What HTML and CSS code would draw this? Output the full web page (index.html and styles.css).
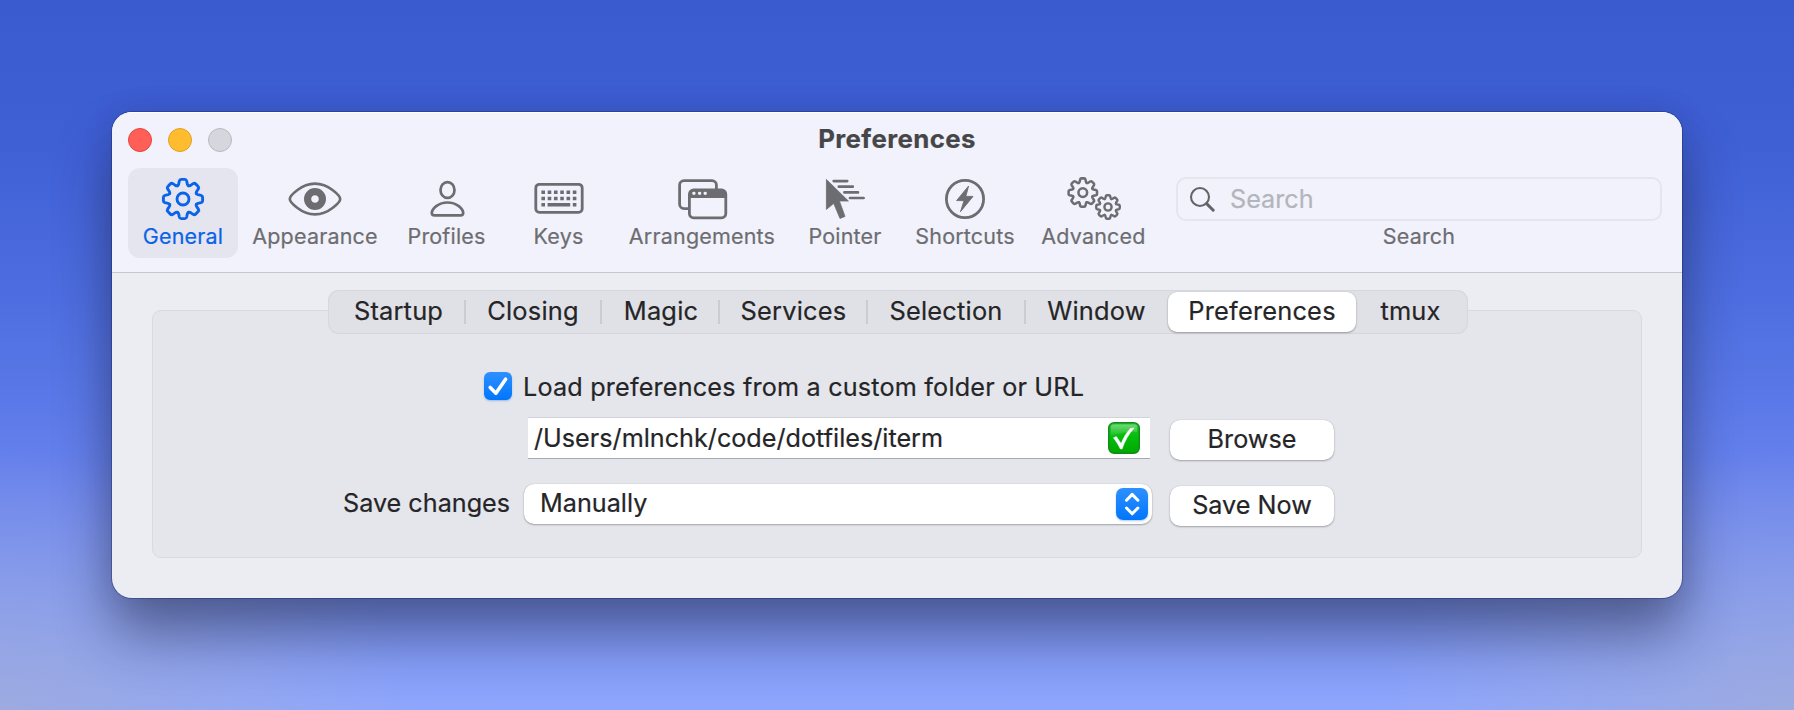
FILE: index.html
```html
<!DOCTYPE html>
<html lang="en">
<head>
<meta charset="utf-8">
<title>Preferences</title>
<link rel="stylesheet" href="styles.css">
</head>
<body>
<svg class="defs" aria-hidden="true">
  <defs>
    <path id="tooth" d="M-5.5-13.3C-4.6-13.7-4.5-14.2-4.3-15L-3.7-18Q-3.3-19.6-1.8-19.6H1.8Q3.3-19.6 3.7-18L4.3-15C4.5-14.2 4.6-13.7 5.5-13.3"/>
    <g id="gear" fill="none" stroke="currentColor" stroke-linecap="round" stroke-linejoin="round">
      <use href="#tooth"/><use href="#tooth" transform="rotate(45)"/><use href="#tooth" transform="rotate(90)"/><use href="#tooth" transform="rotate(135)"/>
      <use href="#tooth" transform="rotate(180)"/><use href="#tooth" transform="rotate(225)"/><use href="#tooth" transform="rotate(270)"/><use href="#tooth" transform="rotate(315)"/>
      <circle r="6"/>
    </g>
  </defs>
</svg>
<main class="window">
  <header class="header">
    <div class="titlebar">
      <div class="lights"><i class="light close"></i><i class="light minimize"></i><i class="light zoom"></i></div>
      <h1 class="title">Preferences</h1>
    </div>
    <nav class="toolbar">
      <a class="tool general selected"><svg class="icon" viewBox="-30 -22 60 44"><use href="#gear" stroke-width="2.9"/></svg><span>General</span></a>
      <a class="tool appearance"><svg class="icon" viewBox="-30 -22 60 44"><path d="M-25.2 0C-25.2-2.8-14-15.4 0-15.4S25.2-2.8 25.2 0S14 15.4 0 15.4S-25.2 2.8-25.2 0Z" fill="none" stroke="currentColor" stroke-width="2.7"/><circle r="7.4" fill="none" stroke="currentColor" stroke-width="7.2"/></svg><span>Appearance</span></a>
      <a class="tool profiles"><svg class="icon" viewBox="-30 -22 60 44"><g fill="none" stroke="currentColor" stroke-width="2.7"><ellipse cx=".5" cy="-9" rx="7" ry="7.9"/><path d="M-12.6 16.4c-2 0-2.6-1-2.6-2.3c0-4.5 6.6-10.6 15.7-10.6s15.7 6.1 15.7 10.6c0 1.3-.6 2.3-2.6 2.3z"/></g></svg><span>Profiles</span></a>
      <a class="tool keys"><svg class="icon" viewBox="-30 -22 60 44"><rect x="-23.2" y="-14.7" width="46.4" height="28" rx="3.6" fill="none" stroke="currentColor" stroke-width="2.8"/><g stroke="currentColor" stroke-width="3.6" stroke-dasharray="3.6 2.68"><path d="M-17.6-6.8H17.4M-17.6-.5H17.4"/></g><path d="M-17.6 5.7h3.6M-11.4 5.7h22.6M13.8 5.7h3.6" stroke="currentColor" stroke-width="3.6"/></svg><span>Keys</span></a>
      <a class="tool arrangements"><svg class="icon" viewBox="-30 -22 60 44"><g fill="none" stroke="currentColor" stroke-width="2.8"><path d="M-14 9.6h-4a4.4 4.4 0 0 1-4.4-4.4V-14a4.4 4.4 0 0 1 4.4-4.4h28A4.4 4.4 0 0 1 14.4-14v4"/><rect x="-12.6" y="-9" width="36.4" height="27.8" rx="4.2"/></g><path fill="currentColor" fill-rule="evenodd" d="M-13-5a5 5 0 0 1 5-5h27a5 5 0 0 1 5 5v4h-37zM-9.8-5.7a1.7 1.7 0 1 0 3.4 0a1.7 1.7 0 1 0-3.4 0M-4.1-5.7a1.7 1.7 0 1 0 3.4 0a1.7 1.7 0 1 0-3.4 0M1.5-5.7a1.7 1.7 0 1 0 3.4 0a1.7 1.7 0 1 0-3.4 0"/></svg><span>Arrangements</span></a>
      <a class="tool pointer"><svg class="icon" viewBox="-30 -22 60 44"><path d="M-18.6-19.6L3.4 2H-5.6L0 17.4L-5 19.4L-11.3 4.4L-18.6 10.4Z" fill="currentColor" stroke="currentColor" stroke-width=".8" stroke-linejoin="round"/><path d="M-11.3-17.9H2.2M-6.2-12.3H7.8M-.6-6.6H13M5-1H18.6" stroke="currentColor" stroke-width="2.7" stroke-linecap="round"/></svg><span>Pointer</span></a>
      <a class="tool shortcuts"><svg class="icon" viewBox="-30 -22 60 44"><circle r="18.6" fill="none" stroke="currentColor" stroke-width="2.8"/><path d="M3.6-13L-8.4 1.6H-1L-4.5 12.7L8-2.6H.8Z" fill="currentColor" stroke="currentColor" stroke-width=".9" stroke-linejoin="round"/></svg><span>Shortcuts</span></a>
      <a class="tool advanced"><svg class="icon" viewBox="-30 -22 60 44"><use href="#gear" stroke-width="3.5" transform="translate(-11.2 -6.4) scale(.725)"/><use href="#gear" stroke-width="4" transform="translate(14 8) scale(.6)"/></svg><span>Advanced</span></a>
      <div class="search">
        <div class="search-field"><svg class="lens" viewBox="0 0 28 28"><circle cx="12" cy="12" r="9" fill="none" stroke="currentColor" stroke-width="2.1"/><path d="M18.6 18.6L25.2 25.2" stroke="currentColor" stroke-width="3" stroke-linecap="round"/></svg><span>Search</span></div>
        <span class="search-label">Search</span>
      </div>
    </nav>
  </header>
  <section class="body">
    <div class="tabs">
      <a class="tab startup">Startup</a>
      <a class="tab closing">Closing</a>
      <a class="tab magic">Magic</a>
      <a class="tab services">Services</a>
      <a class="tab selection">Selection</a>
      <a class="tab win">Window</a>
      <a class="tab prefs active">Preferences</a>
      <a class="tab tmux">tmux</a>
    </div>
    <div class="panel">
      <div class="load-row">
        <span class="checkbox"><svg viewBox="0 0 28 28"><path d="M6.2 15.4L11.9 21.2L21.6 7.2" fill="none" stroke="#fff" stroke-width="3.6" stroke-linecap="round" stroke-linejoin="round"/></svg></span>
        <span class="load-label">Load preferences from a custom folder or URL</span>
      </div>
      <div class="path-row">
        <div class="path-field"><span>/Users/mlnchk/code/dotfiles/iterm</span>
          <svg class="valid" viewBox="0 0 32 32"><defs><linearGradient id="green" x2="0" y2="1"><stop stop-color="#2fc73a"/><stop offset=".45" stop-color="#04bd0c"/><stop offset="1" stop-color="#00a800"/></linearGradient><linearGradient id="gloss" x2="0" y2="1"><stop stop-color="#fff" stop-opacity=".32"/><stop offset="1" stop-color="#fff" stop-opacity=".05"/></linearGradient></defs><rect x=".7" y=".7" width="30.6" height="30.6" rx="5.5" fill="url(#green)" stroke="#128a1c" stroke-width="1.4"/><path d="M3 4.5Q3 2.5 6 2.5H26Q29 2.5 29 4.5V10C20 9 10 12 3 14Z" fill="url(#gloss)"/><path d="M5.4 15.8L8.4 14.6L13.1 21.6C15.5 15.4 18.6 10.5 22.4 6.4L26.2 6C20.5 12.2 16.5 19.5 14.1 27L12.3 26.9C10.2 22.7 8.3 19.4 5.4 15.8Z" fill="#fff" stroke="#fff" stroke-width=".5"/></svg>
        </div>
        <a class="button browse">Browse</a>
      </div>
      <div class="save-row">
        <span class="save-label">Save changes</span>
        <div class="popup"><span>Manually</span>
          <span class="arrows"><svg viewBox="0 0 32 32"><path d="M10.5 12.2L16.2 6.4L21.9 12.2M10.5 20L16.2 25.8L21.9 20" fill="none" stroke="#fff" stroke-width="3" stroke-linecap="round" stroke-linejoin="round"/></svg></span>
        </div>
        <a class="button save">Save Now</a>
      </div>
    </div>
  </section>
</main>
</body>
</html>
```
FILE: styles.css
```css
* { box-sizing: border-box; }
body {
  margin: 0;
  width: 1794px;
  height: 710px;
  overflow: hidden;
  padding: 112px;
  font-family: Inter, "Liberation Sans", sans-serif;
  font-size: 25.2px;
  color: #252527;
  -webkit-text-stroke: .2px;
  background:
    radial-gradient(ellipse 420px 260px at 0 100%, rgba(162,172,215,.75), rgba(160,170,215,0)),
    radial-gradient(ellipse 420px 260px at 100% 100%, rgba(162,172,215,.75), rgba(160,170,215,0)),
    linear-gradient(#3a5ad0 0%, #3f5fd5 20%, #4c6cdf 40%, #5b79e8 57%, #6b85ee 70%, #7b95f5 85%, #8ea6fd 100%);
}
.defs { position: absolute; width: 0; height: 0; }
.window {
  display: flex;
  flex-direction: column;
  width: 1570px;
  height: 486px;
  border-radius: 20px;
  overflow: hidden;
  background: #ecedf3;
  box-shadow: 0 0 0 1px rgba(20,30,90,.35), 0 36px 56px rgba(25,30,55,.48), 0 0 30px rgba(25,30,55,.12);
}
.header {
  height: 161px;
  background: #f1f2fb;
  border-bottom: 1px solid #c6c7cf;
  box-shadow: inset 0 1px #fff;
}
.titlebar { display: grid; grid-template-columns: 104px 1fr 104px; padding: 16px; height: 56px; }
.lights { display: flex; gap: 16px; }
.light { width: 24px; height: 24px; border-radius: 50%; border: 1px solid; }
.close { background: #ff5f57; border-color: #e2463f; }
.minimize { background: #febc2e; border-color: #e0a028; }
.zoom { background: #d6d7de; border-color: #b9bac1; }
.title { margin: -1px 0 0; font-size: 25.8px; line-height: 24px; letter-spacing: .4px; font-weight: 700; text-align: center; color: #464649; }
.toolbar { display: flex; padding-left: 16px; }
.tool {
  display: flex;
  flex-direction: column;
  align-items: center;
  height: 90px;
  padding-top: 9px;
  border-radius: 12px;
  color: #6d6d71;
  font-size: 21.5px;
  line-height: 30px;
  letter-spacing: .18px;
}
.icon { width: 60px; height: 44px; }
.selected { color: #0a63e9; background: #e4e5ee; }
.general { width: 110px; }
.appearance { width: 154px; }
.profiles { width: 109px; }
.keys { width: 115px; }
.arrangements { width: 172px; }
.pointer { width: 114px; }
.shortcuts { width: 126px; }
.advanced { width: 131px; }
.search { display: flex; flex-direction: column; width: 486px; margin: 9px 0 0 17px; }
.search-field {
  display: flex;
  align-items: center;
  height: 44px;
  padding-left: 10px;
  gap: 14px;
  border: 2px solid #e4e5ed;
  border-radius: 10px;
  color: #b4b5bb;
}
.lens { width: 28px; height: 28px; color: #646468; }
.search-label { align-self: center; font-size: 21.5px; line-height: 30px; letter-spacing: .18px; color: #6d6d71; }
.body { display: flex; flex-direction: column; align-items: center; padding: 17px 40px 40px; }
.tabs {
  display: flex;
  z-index: 1;
  width: 1140px;
  height: 44px;
  margin-left: 2px;
  padding: 2px 0;
  border-radius: 11px;
  background: #e0e1e6;
  box-shadow: inset 0 0 0 1px #d6d7dc;
  font-size: 25.4px;
  letter-spacing: .2px;
}
.tab { display: flex; justify-content: center; height: 40px; line-height: 38px; position: relative; }
.startup { width: 137px; padding-left: 4px; }
.closing { width: 136px; }
.magic { width: 118px; padding-left: 2px; }
.services { width: 148px; padding-left: 1px; }
.selection { width: 158px; }
.win { width: 143px; }
.prefs { width: 188px; }
.tmux { width: 112px; padding-right: 3px; }
.startup::after, .closing::after, .magic::after, .services::after, .selection::after {
  content: "";
  position: absolute;
  right: -1px;
  top: 8px;
  width: 2px;
  height: 24px;
  background: #cbccd1;
}
.active { background: #fff; border-radius: 9px; box-shadow: 0 1px 2px rgba(0,0,0,.3), 0 0 1px rgba(0,0,0,.2); }
.panel {
  display: flex;
  flex-direction: column;
  width: 1490px;
  height: 248px;
  margin-top: -24px;
  border: 1px solid #d9dae0;
  border-radius: 9px;
  background: #e5e6ec;
}
.load-row { display: flex; margin: 61px 0 0 331px; gap: 11px; height: 28px; line-height: 30px; }
.load-label { letter-spacing: .19px; }
.checkbox, .arrows { background: linear-gradient(#2e90ff, #0176fc); box-shadow: 0 1px 2px rgba(0,80,200,.3); }
.checkbox { width: 28px; height: 28px; border-radius: 6px; }
.checkbox svg, .arrows svg { display: block; width: 100%; height: 100%; }
.path-row { display: flex; gap: 20px; margin: 18px 0 0 375px; height: 42px; line-height: 40px; }
.path-field {
  display: flex;
  justify-content: space-between;
  width: 622px;
  height: 40px;
  padding: 4px 10px 4px 6px;
  background: #fff;
  line-height: 33px;
  box-shadow: 0 -1px #d2d3da, 0 1px #a9aab0;
}
.valid { width: 32px; height: 32px; }
.button, .popup { background: #fff; border-radius: 10px; box-shadow: 0 1px 2px rgba(0,0,0,.28), 0 0 1px rgba(0,0,0,.25); }
.button { width: 164px; height: 40px; line-height: 38px; text-align: center; }
.browse { margin-top: 2px; }
.save-row { display: flex; margin: 24px 0 0 190px; height: 42px; line-height: 38px; }
.save-label { width: 181px; }
.popup { display: flex; justify-content: space-between; width: 628px; height: 40px; padding: 0 4px 0 16px; margin-right: 18px; }
.arrows { width: 32px; height: 32px; margin-top: 4px; border-radius: 7px; }
.save { margin-top: 2px; }
```
